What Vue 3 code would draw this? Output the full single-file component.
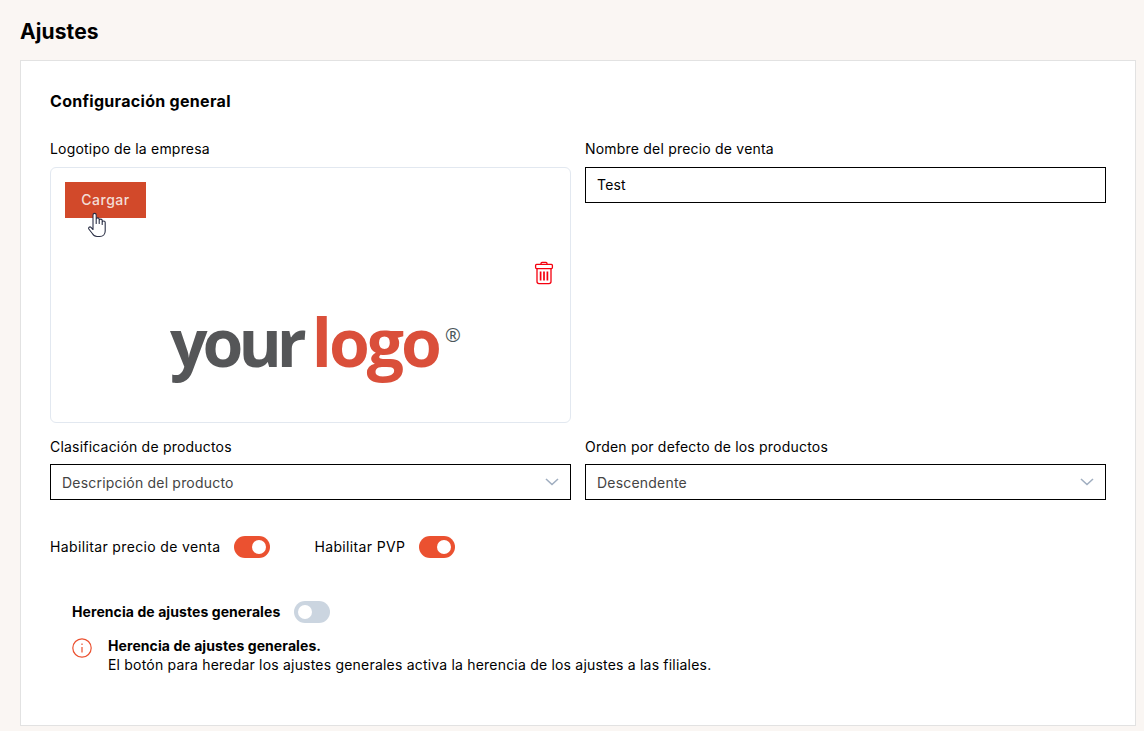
<template>
  <div class="page">
    <h1 class="page-title">Ajustes</h1>
    <section class="card">
      <h2 class="card-title">Configuración general</h2>

      <div class="form-grid">
        <div class="field">
          <label>Logotipo de la empresa</label>
          <div class="logo-box">
            <button class="upload-btn" type="button">Cargar</button>
            <svg class="hand" width="20" height="26" viewBox="0 0 20 26">
              <path d="M6 14.5V3a1.6 1.6 0 0 1 3.2 0v8.5V7.400a1.500 1.500 0 0 1 3 0v4.100V8.600a1.500 1.500 0 0 1 3 0v3.900V10.500a1.500 1.500 0 0 1 3 0V19c0 3-2 5.500-5.500 5.500H10c-2.400 0-3.500-1-4.700-3L1.800 17c-.8-1.200 1-2.800 2.200-1.600L6 17.500z" fill="#fff" stroke="#2a2f45" stroke-width="1.100" stroke-linejoin="round"/>
            </svg>
            <svg class="trash" width="20" height="24" viewBox="0 0 20 24" fill="none" stroke="#f5000f" stroke-width="1.300">
              <path d="M7 3.400V2.400c0-.6.4-1 1-1h4c.6 0 1 .4 1 1v1" stroke-linejoin="round"/>
              <rect x="1.600" y="3.400" width="16.800" height="4.200" rx="1" />
              <path d="M3 7.600v13c0 1.200.8 2 2 2h10c1.200 0 2-.8 2-2v-13" stroke-linejoin="round"/>
              <path d="M6.600 10.500v9M10 10.500v9M13.400 10.500v9" stroke-width="1.700"/>
            </svg>
            <div class="logo-mark">
              <span class="logo-your">your</span>
              <span class="logo-logo">logo</span>
              <span class="logo-reg">®</span>
            </div>
          </div>
        </div>

        <div class="field">
          <label>Nombre del precio de venta</label>
          <input class="text-input" type="text" value="Test" />
        </div>

        <div class="field field-select" v-for="sel in selects" :key="sel.label">
          <label>{{ sel.label }}</label>
          <div class="select-box">
            <span>{{ sel.value }}</span>
            <svg width="14" height="8" viewBox="0 0 14 8" fill="none" stroke="#a0aec0" stroke-width="1.600">
              <path d="M1 1l6 5.500L13 1" />
            </svg>
          </div>
        </div>
      </div>

      <div class="toggle-row">
        <div class="toggle-item" v-for="t in toggles" :key="t">
          <span class="toggle-label">{{ t }}</span>
          <span class="switch on"><i></i></span>
        </div>
      </div>

      <div class="inherit">
        <div class="toggle-item">
          <strong class="toggle-label">Herencia de ajustes generales</strong>
          <span class="switch"><i></i></span>
        </div>
        <div class="notice">
          <svg width="20" height="20" viewBox="0 0 20 20" fill="none" stroke="#eb5130" stroke-width="1.200">
            <circle cx="10" cy="10" r="9.200" />
            <path d="M10 9v5.500M10 5.500v1.400" />
          </svg>
          <p>
            <strong>Herencia de ajustes generales.</strong><br />
            El botón para heredar los ajustes generales activa la herencia de los ajustes a las filiales.
          </p>
        </div>
      </div>
    </section>
  </div>
</template>

<script setup>
const selects = [
  { label: 'Clasificación de productos', value: 'Descripción del producto' },
  { label: 'Orden por defecto de los productos', value: 'Descendente' }
]
const toggles = ['Habilitar precio de venta', 'Habilitar PVP']
</script>

<style>
body {
  background: #faf6f3;
}
</style>

<style scoped>
.page {
  height: 731px;
  box-sizing: border-box;
  padding: 20px 8px 0 20px;
  overflow: hidden;
  font-family: Inter, "Liberation Sans", sans-serif;
  font-size: 14px;
  letter-spacing: 0.2px;
  color: #000;
}

.page-title {
  margin: 0 0 17px;
  font-size: 21px;
  line-height: 23px;
  font-weight: 700;
  letter-spacing: 0.1px;
}

.card {
  height: 666px;
  box-sizing: border-box;
  padding: 29px 29px 0;
  background: #fff;
  border: 1px solid #e2e2e2;
}

.card-title {
  margin: 0 0 28px;
  font-size: 16px;
  line-height: 22px;
  font-weight: 700;
  letter-spacing: 0.3px;
}

.form-grid {
  display: grid;
  grid-template-columns: 521px 521px;
  column-gap: 14px;
  row-gap: 14px;
}

.field label {
  display: block;
  height: 27px;
  box-sizing: border-box;
  line-height: 18px;
}

.field-select label {
  padding-top: 1px;
}

.logo-box {
  position: relative;
  height: 256px;
  box-sizing: border-box;
  border: 1px solid #e2e8f0;
  border-radius: 6px;
  padding: 14px;
}

.upload-btn {
  display: block;
  width: 81px;
  height: 36px;
  border: 0;
  background: #d2492a;
  color: #f3ddd6;
  font: inherit;
  font-weight: 500;
  letter-spacing: 0.5px;
  padding: 0 0 2px;
}

.hand {
  position: absolute;
  left: 36px;
  top: 44px;
}

.trash {
  position: absolute;
  left: 483px;
  top: 93px;
}

.logo-mark {
  position: absolute;
  left: 119px;
  top: 123px;
  display: flex;
  align-items: baseline;
  font-family: "Open Sans", sans-serif;
  font-weight: 700;
  font-size: 66px;
  line-height: 100px;
  letter-spacing: -3px;
}

.logo-your {
  color: #555658;
  margin-right: 10px;
  letter-spacing: -5px;
}

.logo-logo {
  color: #da4f3a;
}

.logo-reg {
  color: #4a5658;
  font-size: 19px;
  letter-spacing: 0;
  font-weight: 400;
  align-self: flex-start;
  line-height: 20px;
  margin: 34px 0 0 6px;
}

.text-input,
.select-box {
  display: flex;
  align-items: center;
  justify-content: space-between;
  width: 100%;
  height: 36px;
  box-sizing: border-box;
  border: 1px solid #000;
  padding: 0 11px;
  font: inherit;
  letter-spacing: inherit;
  background: #fff;
  border-radius: 0;
  outline: none;
}

.text-input {
  padding-bottom: 2px;
}

.select-box {
  color: #444;
}

.toggle-row {
  display: flex;
  gap: 44px;
  margin-top: 36px;
  letter-spacing: 0.36px;
}

.toggle-item {
  display: flex;
  align-items: center;
  gap: 14px;
  height: 22px;
}

.toggle-label {
  margin-bottom: 2px;
}

.toggle-item strong,
.notice strong {
  letter-spacing: 0.08px;
}

.switch {
  position: relative;
  display: block;
  width: 36px;
  height: 22px;
  border-radius: 11px;
  background: #cbd5e0;
}

.switch i {
  position: absolute;
  top: 4px;
  left: 4px;
  width: 14px;
  height: 14px;
  border-radius: 50%;
  background: #fff;
}

.switch.on {
  background: #eb5130;
}

.switch.on i {
  left: 18px;
}

.inherit {
  margin: 43px 0 0 22px;
}

.notice {
  display: flex;
  gap: 16px;
  margin-top: 13px;
}

.notice svg {
  flex: none;
  margin-top: 2px;
}

.notice p {
  margin: 0;
  line-height: 19px;
}
</style>
